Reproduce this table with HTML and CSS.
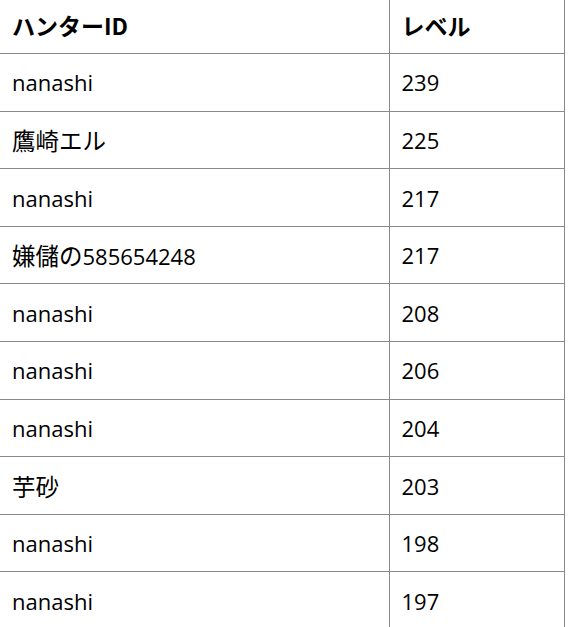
FILE: index.html
```html
<!DOCTYPE html>
<html lang="ja">
<head>
<meta charset="utf-8">
<link rel="stylesheet" href="styles.css">
</head>
<body>
<table class="ranking">
  <thead>
    <tr><th class="col-id">ハンターID</th><th class="col-lv">レベル</th></tr>
  </thead>
  <tbody>
    <tr><td>nanashi</td><td>239</td></tr>
    <tr><td><span class="ja">鷹崎エル</span></td><td>225</td></tr>
    <tr><td>nanashi</td><td>217</td></tr>
    <tr><td><span class="ja">嫌儲の</span>585654248</td><td>217</td></tr>
    <tr><td>nanashi</td><td>208</td></tr>
    <tr><td>nanashi</td><td>206</td></tr>
    <tr><td>nanashi</td><td>204</td></tr>
    <tr><td><span class="ja">芋砂</span></td><td>203</td></tr>
    <tr><td>nanashi</td><td>198</td></tr>
    <tr><td>nanashi</td><td>197</td></tr>
  </tbody>
</table>
</body>
</html>
```

FILE: styles.css
```css
html, body {
  margin: 0;
  padding: 0;
  background: #fff;
}
body {
  font-family: "Open Sans", "Noto Sans CJK JP", sans-serif;
  font-size: 22px;
  color: #000;
  overflow: hidden;
}
.ranking {
  border-collapse: collapse;
  width: 565px;
  table-layout: fixed;
  margin-top: -4px;
}
.ranking th,
.ranking td {
  height: 57.6px;
  box-sizing: border-box;
  padding: 0 12px;
  text-align: left;
  vertical-align: middle;
  border-bottom: 1px solid #8a8a8a;
  white-space: nowrap;
}
.ranking th {
  font-family: "Noto Sans CJK JP", sans-serif;
  font-weight: 700;
  font-size: 23px;
}
.ranking .ja {
  font-family: "Noto Sans CJK JP", sans-serif;
  font-size: 23.5px;
}
.ranking .col-id {
  width: 389px;
}
.ranking th:last-child,
.ranking td:last-child {
  border-left: 1px solid #8a8a8a;
  border-right: 1px solid #8a8a8a;
  padding-left: 12px;
}
```
